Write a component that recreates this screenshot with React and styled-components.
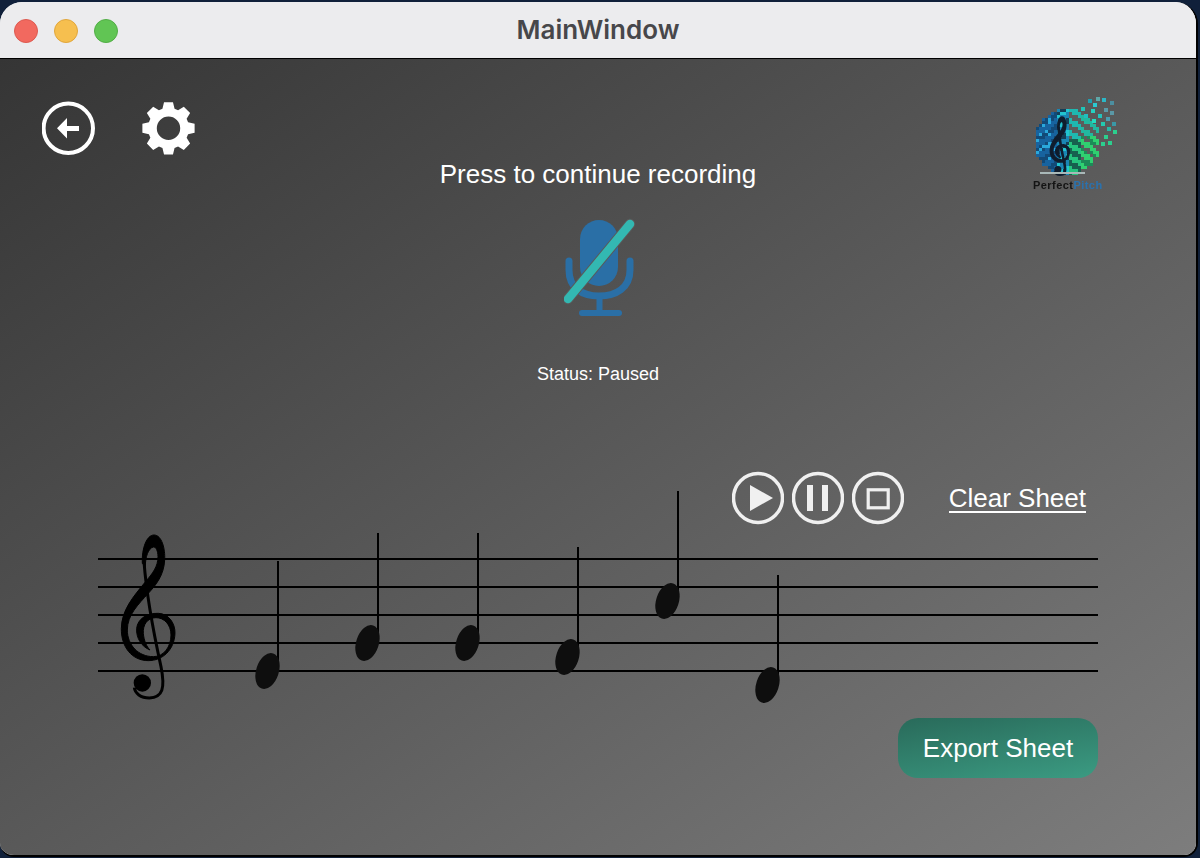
import React from "react";
import styled, { createGlobalStyle } from "styled-components";

const GlobalStyle = createGlobalStyle`
  html, body { margin: 0; padding: 0; background: #10203a; }
  body { font-family: "Liberation Sans", Arial, sans-serif; }
  * { box-sizing: border-box; }
`;

const Desktop = styled.div`
  width: 1200px;
  height: 858px;
  padding: 2px 2px 1px 0;
  background: #10203a;
  overflow: hidden;
  display: flex;
`;

const Window = styled.div`
  flex: 1;
  display: flex;
  flex-direction: column;
  border-radius: 22px 22px 14px 14px;
  border-right: 2px solid #000;
  border-bottom: 2px solid #000;
  overflow: hidden;
  background: #ececee;
`;

const TitleBar = styled.header`
  height: 57px;
  flex: none;
  display: grid;
  grid-template-columns: 1fr auto 1fr;
  align-items: center;
  background: #ececee;
  border-bottom: 1px solid #000;
`;

const Lights = styled.div`
  display: flex;
  gap: 16px;
  margin-top: 1px;
  padding-left: 14px;
`;

const Light = styled.span`
  width: 24px;
  height: 24px;
  border-radius: 50%;
  background: ${(p) => p.$fill};
  border: 1px solid ${(p) => p.$edge};
`;

const Title = styled.h1`
  margin: -2px 0 0;
  font-family: "Inter", "Liberation Sans", sans-serif;
  font-size: 26px;
  font-weight: 600;
  color: #47474a;
`;

const Content = styled.main`
  flex: 1;
  display: flex;
  flex-direction: column;
  background: linear-gradient(to bottom right, #353535 0%, #7d7d7d 100%);
  color: #fff;
`;

const TopSection = styled.section`
  display: grid;
  grid-template-columns: 1fr 340px 1fr;
  padding: 36px 42px 0;
`;

const NavIcons = styled.nav`
  display: flex;
  gap: 46px;
  margin-top: 6px;
  align-items: flex-start;
`;

const IconSvg = styled.svg`
  display: block;
  flex: none;
`;

const LogoArt = styled(IconSvg)`
  filter: blur(0.6px);
`;

const Center = styled.div`
  display: flex;
  flex-direction: column;
  align-items: center;
  padding-top: 65px;
`;

const Prompt = styled.div`
  font-size: 26px;
  line-height: 28px;
  white-space: nowrap;
`;

const MicWrap = styled.div`
  margin-top: 30px;
  margin-left: 3px;
`;

const Status = styled.div`
  margin-top: 46px;
  font-size: 18px;
  line-height: 20px;
`;

const LogoBox = styled.div`
  justify-self: end;
  position: relative;
  width: 90px;
  height: 100px;
  margin-right: 34px;
`;

const LogoText = styled.div`
  position: absolute;
  left: 3px;
  top: 84px;
  font-size: 11px;
  font-weight: 700;
  letter-spacing: 0.45px;
  color: #141414;
  white-space: nowrap;
  filter: blur(0.4px);
`;

const LogoAccent = styled.span`
  color: #2a72ae;
`;

const Controls = styled.div`
  display: flex;
  align-items: center;
  justify-content: flex-end;
  margin-top: 87px;
  padding-right: 110px;
  height: 54px;
`;

const TransportGroup = styled.div`
  display: flex;
  gap: 8px;
`;

const ClearLink = styled.button`
  margin: 2px 0 0 45px;
  padding: 0;
  background: none;
  border: 0;
  border-bottom: 2px solid #fff;
  color: #fff;
  font: 26px/25px "Liberation Sans", sans-serif;
`;

const StaffWrap = styled.div`
  margin: 5px 0 0 98px;
  height: 175px;
`;

const StaffSvg = styled.svg`
  display: block;
  overflow: visible;
`;

const Footer = styled.div`
  display: flex;
  justify-content: flex-end;
  padding: 13px 98px 0 0;
`;

const ExportButton = styled.button`
  width: 200px;
  height: 60px;
  border: 0;
  border-radius: 20px;
  background: linear-gradient(170deg, #296a5a 0%, #3b9b82 100%);
  color: #fff;
  font: 26px "Liberation Sans", sans-serif;
`;

function gearPath(cx, cy) {
  const teeth = 8;
  const pts = [];
  for (let i = 0; i < teeth; i++) {
    const a = (i * Math.PI * 2) / teeth - Math.PI / 2;
    const spread = 0.17;
    const inner = 0.3;
    const rOut = 26.5;
    const rIn = 20.5;
    const p = (r, t) => `${(cx + r * Math.cos(t)).toFixed(2)} ${(cy + r * Math.sin(t)).toFixed(2)}`;
    pts.push(`${p(rIn, a - inner)}`, `${p(rOut, a - spread)}`, `${p(rOut, a + spread)}`, `${p(rIn, a + inner)}`);
  }
  const r = 11.7;
  return `M${pts.join("L")}Z M${cx - r} ${cy} a${r} ${r} 0 1 0 ${2 * r} 0 a${r} ${r} 0 1 0 ${-2 * r} 0Z`;
}

const BackIcon = () => (
  <IconSvg width="54" height="54" viewBox="0 0 54 54">
    <circle cx="26.3" cy="27.3" r="24.7" fill="none" stroke="#fff" strokeWidth="4" />
    <path d="M15 27.3 L25 17 V25 H37 V30 H25 V37.500 Z" fill="#fff" />
  </IconSvg>
);

const GearIcon = () => (
  <IconSvg width="54" height="54" viewBox="0 0 54 54">
    <path d={gearPath(26.5, 27.3)} fill="#fff" fillRule="evenodd" />
  </IconSvg>
);

const MicIcon = () => (
  <IconSvg width="72" height="100" viewBox="0 0 72 100">
    <rect x="16" y="2" width="38" height="66" rx="19" fill="#2a6fa6" />
    <path d="M5 43 V52 C5 70 18 78 35 78 C52 78 66 70 66 52 V43" fill="none" stroke="#2a6fa6" strokeWidth="7" strokeLinecap="round" />
    <path d="M35.500 78 V95" stroke="#2a6fa6" strokeWidth="6" />
    <path d="M18 95 H55" stroke="#2a6fa6" strokeWidth="6" strokeLinecap="round" />
    <path d="M4 81 L66 6" stroke="#5a5a5a" strokeWidth="10.500" strokeLinecap="round" />
    <path d="M4 81 L66 6" stroke="#33b8b2" strokeWidth="8.500" strokeLinecap="round" />
  </IconSvg>
);

const TransportButton = ({ children }) => (
  <IconSvg width="52" height="54" viewBox="0 0 52 54">
    <circle cx="26" cy="27" r="24.500" fill="none" stroke="#f0f0f0" strokeWidth="3.500" />
    {children}
  </IconSvg>
);

const CLEF_BODY =
  "M157 115 C155 70 170 30 192 30 C215 30 226 70 224 105 C222 150 198 180 175 205 C145 238 112 270 112 315 C112 360 145 395 190 395 C222 395 243 365 243 330 C243 298 222 278 198 278 C172 278 158 300 160 325 C162 348 170 365 180 375 C155 365 138 340 140 310 C143 282 170 264 205 265 C236 266 256 295 255 325 C253 375 218 407 175 407 C125 407 93 365 94 310 C95 255 130 215 165 172 C188 145 204 125 204 95 C204 78 198 65 190 66 C175 70 166 95 166 125 Z";
const CLEF_TAIL = "M162 110 C168 190 190 320 213 425 C226 490 218 518 178 519 C152 519 135 505 133 488";

const Clef = ({ color = "#000", ...rest }) => (
  <g {...rest}>
    <path d={CLEF_BODY} fill={color} stroke={color} strokeWidth="3" />
    <path d={CLEF_TAIL} fill="none" stroke={color} strokeWidth="9" />
    <circle cx="157" cy="474" r="26" fill={color} />
  </g>
);

const notes = [
  { x: 267, y: 671, top: 561 },
  { x: 367, y: 643, top: 533 },
  { x: 467, y: 643, top: 533 },
  { x: 567, y: 657, top: 547 },
  { x: 667, y: 601, top: 491 },
  { x: 767, y: 685, top: 575 },
];
const STAFF_LINES = [559, 587, 615, 643, 671];

const Staff = () => (
  <StaffSvg width="1000" height="175" viewBox="98 530 1000 175">
    {STAFF_LINES.map((y) => (
      <rect key={y} x="98" y={y - 1} width="1000" height="2" fill="#000" />
    ))}
    <Clef transform="translate(90 525) scale(0.3333)" />
    {notes.map((n) => (
      <g key={n.x}>
        <rect x={n.x + 10} y={n.top} width="2" height={n.y - n.top} fill="#000" />
        <ellipse cx={n.x + 0.5} cy={n.y} rx="11.300" ry="18.500" transform={`rotate(18 ${n.x + 0.5} ${n.y})`} fill="#0e0e0e" />
      </g>
    ))}
  </StaffSvg>
);

function logoCells() {
  const cells = [];
  const cx = 37.5;
  const cy = 47;
  const R = 33;
  const S = 3;
  for (let y = 14; y < 80; y += S) {
    for (let x = 3; x < 72; x += S) {
      const d = Math.hypot(x + 1.5 - cx, y + 1.5 - cy);
      if (d > R) continue;
      const t = (x - 5) / 64;
      const hash = (x * 7 + y * 13 + ((x * y) % 11)) % 9;
      const bandL = Math.floor((y + x * 0.55) / 6) % 2 === 0;
      const bandR = Math.floor((y - x * 0.75 + 80) / 6) % 2 === 0;
      let fill;
      if (t < 0.3) {
        fill = bandL ? "#17639f" : hash < 3 ? "#2aa8dc" : "#124a78";
      } else if (t < 0.5) {
        fill = bandL ? "#1a86b4" : hash < 4 ? "#22c4d0" : "#143f58";
      } else if (t < 0.7) {
        if (y < 42) fill = bandR ? "#1fb8b0" : "#5c5c5c";
        else fill = bandR ? "#26c47e" : "#17604f";
      } else {
        if (y < 40) fill = bandR ? "#22b8a0" : "#5c5c5c";
        else fill = bandR ? "#30d070" : hash < 4 ? "#1c8a58" : "#5c5c5c";
      }
      cells.push({ x, y, fill });
    }
  }
  return cells;
}
const LOGO_CELLS = logoCells();
const LOGO_BITS = [
  [51, 12, "#1fc4b8"], [58, 4, "#1f9fb0"], [63, 8, "#2ac9d0"], [66, 2, "#5fa7a8"], [72, 3, "#2bb7c7"], [74, 13, "#5a9aa8"],
  [80, 6, "#4c8fa0"], [54, 19, "#1fbfc0"], [61, 14, "#25d0c0"], [68, 19, "#23c3bd"], [76, 22, "#4a9db0"], [80, 16, "#5a98a6"],
  [82, 27, "#3a98a6"], [77, 32, "#26b8a8"], [83, 35, "#2ccf8e"], [74, 40, "#2ccf8e"], [78, 46, "#2ccf8e"], [71, 27, "#23c9b0"],
  [62, 24, "#22ddc0"], [71, 47, "#2ccf8e"],
];

const Logo = () => (
  <LogoBox>
    <LogoArt width="90" height="84" viewBox="0 0 90 84" shapeRendering="crispEdges">
      {LOGO_CELLS.map((c) => (
        <rect key={`${c.x}-${c.y}`} x={c.x} y={c.y} width="3" height="3" fill={c.fill} />
      ))}
      {LOGO_BITS.map(([x, y, fill]) => (
        <rect key={`${x}-${y}`} x={x} y={y} width="4" height="4" fill={fill} />
      ))}
      <g shapeRendering="auto">
        <g transform="translate(9.3 18.5) scale(0.118)">
          <path d={CLEF_TAIL} fill="none" stroke="#0f1d2e" strokeWidth="22" />
          <path d={CLEF_BODY} fill="#0f1d2e" stroke="#0f1d2e" strokeWidth="14" />
          <circle cx="157" cy="474" r="30" fill="#0f1d2e" />
        </g>
      </g>
      <rect x="10" y="77" width="45" height="2" fill="#a9b8b8" />
    </LogoArt>
    <LogoText>
      Perfect<LogoAccent>Pitch</LogoAccent>
    </LogoText>
  </LogoBox>
);

export default function App() {
  return (
    <Desktop>
      <GlobalStyle />
      <Window>
        <TitleBar>
          <Lights>
            <Light $fill="#f2695f" $edge="#dc5a50" />
            <Light $fill="#f6bf4f" $edge="#e0a63c" />
            <Light $fill="#61c554" $edge="#52ad46" />
          </Lights>
          <Title>MainWindow</Title>
        </TitleBar>
        <Content>
          <TopSection>
            <NavIcons>
              <BackIcon />
              <GearIcon />
            </NavIcons>
            <Center>
              <Prompt>Press to continue recording</Prompt>
              <MicWrap>
                <MicIcon />
              </MicWrap>
              <Status>Status: Paused</Status>
            </Center>
            <Logo />
          </TopSection>
          <Controls>
            <TransportGroup>
              <TransportButton>
                <path d="M18 14 L41 27 L18 40 Z" fill="#f0f0f0" />
              </TransportButton>
              <TransportButton>
                <rect x="15" y="14" width="6" height="26" fill="#f0f0f0" />
                <rect x="30" y="14" width="6" height="26" fill="#f0f0f0" />
              </TransportButton>
              <TransportButton>
                <rect x="16.200" y="18.800" width="20" height="18" fill="none" stroke="#f0f0f0" strokeWidth="3.200" />
              </TransportButton>
            </TransportGroup>
            <ClearLink>Clear Sheet</ClearLink>
          </Controls>
          <StaffWrap>
            <Staff />
          </StaffWrap>
          <Footer>
            <ExportButton>Export Sheet</ExportButton>
          </Footer>
        </Content>
      </Window>
    </Desktop>
  );
}
